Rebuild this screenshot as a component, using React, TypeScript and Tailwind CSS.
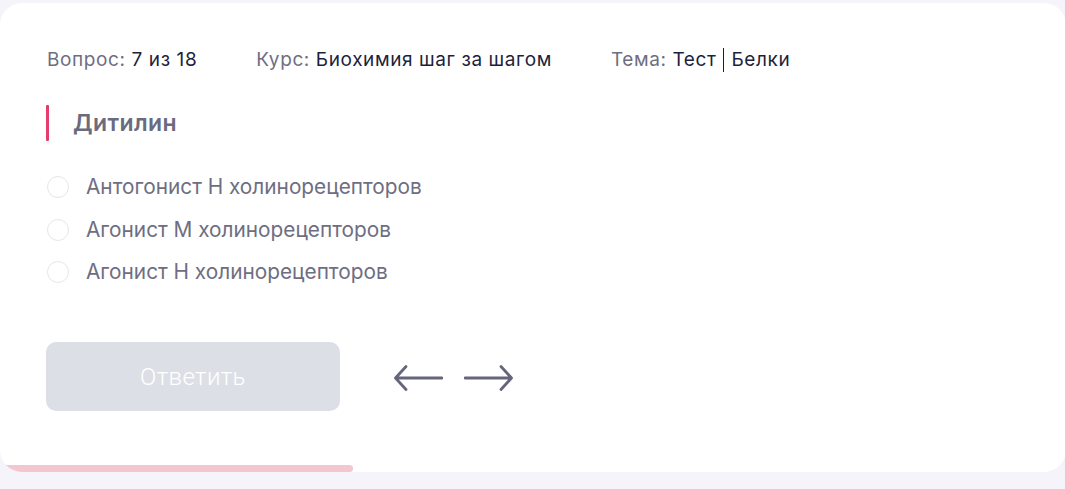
import React from "react";

const options = [
  "Антогонист Н холинорецепторов",
  "Агонист М холинорецепторов",
  "Агонист Н холинорецепторов",
];

export default function App() {
  return (
    <div
      className="w-[1065px] h-[489px] bg-[#f4f4fa] pt-[3px] pb-[17px] overflow-hidden"
      style={{ fontFamily: "Inter, 'Noto Sans', sans-serif" }}
    >
      <div className="relative h-[469px] w-[1066px] bg-white rounded-[22px] overflow-hidden flex flex-col">
        <div className="flex flex-col pl-[47px] pt-[45px] flex-1">
          <div className="flex items-center gap-[59px] text-[19px] leading-[24px] tracking-[0.6px]">
            <div className="whitespace-nowrap">
              <span className="text-[#6e6e82]">Вопрос: </span>
              <span className="text-[#1d1f3e]">7 из 18</span>
            </div>
            <div className="whitespace-nowrap">
              <span className="text-[#6e6e82]">Курс: </span>
              <span className="text-[#1d1f3e]">Биохимия шаг за шагом</span>
            </div>
            <div className="whitespace-nowrap flex items-center">
              <span className="text-[#6e6e82]">Тема:&nbsp;</span>
              <span className="text-[#1d1f3e]">Тест</span>
              <span className="inline-block w-[1px] h-[24px] bg-[#1d1f3e] mx-[7px]" />
              <span className="text-[#1d1f3e]">Белки</span>
            </div>
          </div>

          <div className="mt-[33px] flex items-center h-[36px]">
            <div className="w-[3px] h-[36px] bg-[#e43d6a] rounded-[1px] -ml-[1px]" />
            <div className="ml-[24px] text-[23px] leading-[30px] font-semibold tracking-[0.4px] text-[#6b6b7e]">
              Дитилин
            </div>
          </div>

          <div className="mt-[35px] flex flex-col gap-[20.5px]">
            {options.map((o) => (
              <label key={o} className="flex items-center h-[22px]">
                <span className="w-[22px] h-[22px] shrink-0 rounded-full border-[1.5px] border-[#e6e6ec] bg-white" />
                <span className="ml-[17px] text-[20.8px] leading-[22px] text-[#6e6e82] whitespace-nowrap">{o}</span>
              </label>
            ))}
          </div>

          <div className="mt-[59px] flex items-center">
            <button
              className="w-[294px] h-[69px] rounded-[10px] bg-[#dce0e6] text-white text-[24px] font-light tracking-[0.4px] -ml-[1px]"
              style={{ fontFamily: "Roboto, 'Liberation Sans', sans-serif" }}
            >
              Ответить
            </button>
            <div className="ml-[54px] mt-[3px] flex items-center gap-[21px] text-[#65657c]">
              <svg width="49" height="26" viewBox="0 0 49 26" fill="none">
                <path d="M48 13H2M12 1.5L1.5 13L12 24.5" stroke="currentColor" strokeWidth="2.8" strokeLinecap="round" strokeLinejoin="round" />
              </svg>
              <svg width="49" height="26" viewBox="0 0 49 26" fill="none">
                <path d="M1 13H47M37 1.5L47.5 13L37 24.5" stroke="currentColor" strokeWidth="2.8" strokeLinecap="round" strokeLinejoin="round" />
              </svg>
            </div>
          </div>
        </div>
        <div className="h-[7px] w-[353px] bg-[#f4c6cd] rounded-r-full shrink-0" />
      </div>
    </div>
  );
}
